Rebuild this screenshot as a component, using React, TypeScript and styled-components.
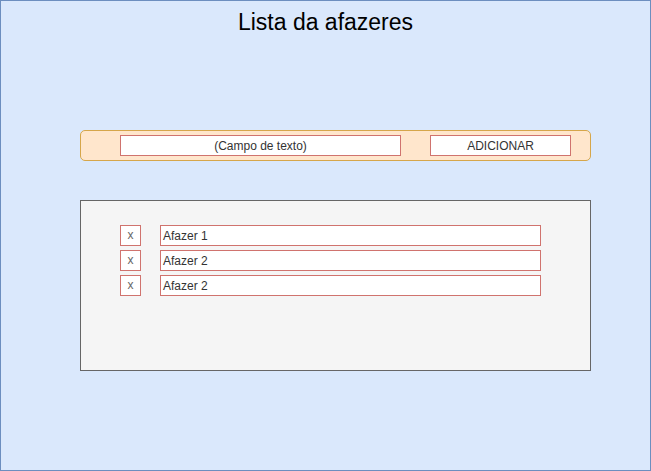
import React from "react";
import styled, { createGlobalStyle } from "styled-components";

const Global = createGlobalStyle`
  html, body { margin: 0; padding: 0; background: #ffffff; }
  * { box-sizing: border-box; }
  body { font-family: "Liberation Sans", Arial, Helvetica, sans-serif; }
`;

const Frame = styled.div`
  width: 651px;
  height: 471px;
  border: 1px solid #6c8ebf;
  background: #dae8fc;
  display: flex;
  flex-direction: column;
  align-items: flex-start;
  padding-left: 79px;
`;

const Title = styled.h1`
  align-self: stretch;
  margin: 8px 0 0 -79px;
  font-size: 23px;
  font-weight: normal;
  line-height: 26px;
  text-align: center;
  color: #000000;
`;

const InputBar = styled.div`
  margin-top: 95px;
  width: 511px;
  height: 31px;
  border: 1px solid #d6a64a;
  border-radius: 5px;
  background: #ffe6cc;
  display: flex;
  align-items: center;
  padding-left: 39px;
  gap: 29px;
`;

const Box = styled.div<{ $w: number; $align?: "left" | "center" }>`
  width: ${(p) => p.$w}px;
  height: 21px;
  border: 1px solid #d0736e;
  background: #ffffff;
  display: flex;
  align-items: center;
  justify-content: ${(p) => (p.$align === "left" ? "flex-start" : "center")};
  padding-left: ${(p) => (p.$align === "left" ? "2px" : "0")};
  font-size: 12px;
  color: #333333;
  white-space: nowrap;
`;

const RemoveBox = styled(Box)`
  color: #666666;
  padding-bottom: 1px;
`;

const ListPanel = styled.div`
  margin-top: 39px;
  width: 511px;
  height: 171px;
  border: 1px solid #666666;
  background: #f5f5f5;
  display: flex;
  flex-direction: column;
  gap: 4px;
  padding: 24px 0 0 39px;
`;

const Row = styled.div`
  display: flex;
  gap: 19px;
`;

const items = ["Afazer 1", "Afazer 2", "Afazer 2"];

export default function App() {
  return (
    <>
      <Global />
      <Frame>
        <Title>Lista da afazeres</Title>
        <InputBar>
          <Box $w={281}>(Campo de texto)</Box>
          <Box $w={141}>ADICIONAR</Box>
        </InputBar>
        <ListPanel>
          {items.map((t, i) => (
            <Row key={i}>
              <RemoveBox $w={21}>x</RemoveBox>
              <Box $w={381} $align="left">
                {t}
              </Box>
            </Row>
          ))}
        </ListPanel>
      </Frame>
    </>
  );
}
